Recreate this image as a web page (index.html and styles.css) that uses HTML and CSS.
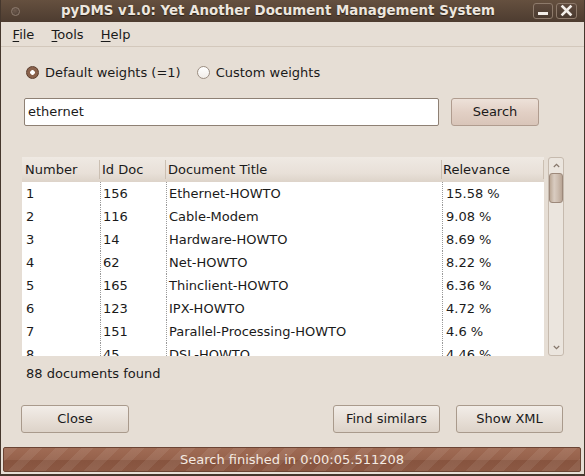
FILE: index.html
```html
<!DOCTYPE html>
<html>
<head>
<meta charset="utf-8">
<link rel="stylesheet" href="styles.css">
</head>
<body>
<div class="window">
  <div class="titlebar">
    <span class="win-icon"></span>
    <div class="title">pyDMS v1.0: Yet Another Document Management System</div>
    <div class="wm-buttons">
      <span class="wm-btn"><svg width="18" height="14" viewBox="0 0 18 14"><rect x="4" y="8" width="10" height="3" fill="#f3eee9"/></svg></span>
      <span class="wm-btn wm-close"><svg width="19" height="14" viewBox="0 0 19 14"><path d="M5.5 2.5 L13.5 10.5 M13.5 2.5 L5.5 10.5" stroke="#f3eee9" stroke-width="2.6" stroke-linecap="square" fill="none"/></svg></span>
    </div>
  </div>
  <div class="menubar">
    <span class="menu-item"><u>F</u>ile</span>
    <span class="menu-item"><u>T</u>ools</span>
    <span class="menu-item"><u>H</u>elp</span>
  </div>
  <div class="content">
    <div class="radio-row">
      <label class="radio"><span class="radio-dot checked"></span>Default weights (=1)</label>
      <label class="radio"><span class="radio-dot"></span>Custom weights</label>
    </div>
    <div class="search-row">
      <div class="entry">ethernet</div>
      <div class="button search-btn">Search</div>
    </div>
    <div class="results">
      <div class="list">
        <div class="list-header grid">
          <div class="hcell h1">Number</div>
          <div class="hcell h2">Id Doc</div>
          <div class="hcell h3">Document Title</div>
          <div class="hcell h4">Relevance</div>
        </div>
        <div class="list-body">
          <div class="row grid"><div class="cell">1</div><div class="cell">156</div><div class="cell">Ethernet-HOWTO</div><div class="cell">15.58 %</div></div>
          <div class="row grid"><div class="cell">2</div><div class="cell">116</div><div class="cell">Cable-Modem</div><div class="cell">9.08 %</div></div>
          <div class="row grid"><div class="cell">3</div><div class="cell">14</div><div class="cell">Hardware-HOWTO</div><div class="cell">8.69 %</div></div>
          <div class="row grid"><div class="cell">4</div><div class="cell">62</div><div class="cell">Net-HOWTO</div><div class="cell">8.22 %</div></div>
          <div class="row grid"><div class="cell">5</div><div class="cell">165</div><div class="cell">Thinclient-HOWTO</div><div class="cell">6.36 %</div></div>
          <div class="row grid"><div class="cell">6</div><div class="cell">123</div><div class="cell">IPX-HOWTO</div><div class="cell">4.72 %</div></div>
          <div class="row grid"><div class="cell">7</div><div class="cell">151</div><div class="cell">Parallel-Processing-HOWTO</div><div class="cell">4.6 %</div></div>
          <div class="row grid"><div class="cell">8</div><div class="cell">45</div><div class="cell">DSL-HOWTO</div><div class="cell">4.46 %</div></div>
        </div>
      </div>
      <div class="scrollbar">
        <div class="sb-arrow"><svg width="7" height="5" viewBox="0 0 7 5"><polyline points="0.8,4 3.5,1.3 6.2,4" stroke="#85766a" stroke-width="1.2" fill="none"/></svg></div>
        <div class="sb-thumb"></div>
        <div class="sb-trough"></div>
        <div class="sb-arrow"><svg width="7" height="5" viewBox="0 0 7 5"><polyline points="0.8,1 3.5,3.7 6.2,1" stroke="#85766a" stroke-width="1.2" fill="none"/></svg></div>
      </div>
    </div>
    <div class="count">88 documents found</div>
    <div class="button-row">
      <div class="button btn-close">Close</div>
      <div class="spacer"></div>
      <div class="button btn-wide">Find similars</div>
      <div class="button btn-wide">Show XML</div>
    </div>
  </div>
  <div class="statusbar">Search finished in 0:00:05.511208</div>
</div>
</body>
</html>
```

FILE: styles.css
```css
* { box-sizing: border-box; }
html, body { margin: 0; padding: 0; }
body {
  width: 585px;
  height: 476px;
  overflow: hidden;
  background: #3a2d25;
  font-family: "DejaVu Sans", "Liberation Sans", sans-serif;
  font-size: 13px;
  color: #1a1a1a;
}
.window {
  width: 585px;
  height: 476px;
  display: flex;
  flex-direction: column;
  background: #e6ded5;
  border: 1px solid #45372d;
  border-top: 0;
  border-bottom-width: 2px;
}
.titlebar {
  height: 22px;
  flex: none;
  display: flex;
  align-items: center;
  background: linear-gradient(#65503f, #4d3c30);
}
.win-icon {
  width: 9px;
  height: 9px;
  margin-left: 10px;
  border-radius: 50%;
  border: 1px solid #8f7d70;
  background: radial-gradient(circle at 40% 35%, #6e5b4e, #4a3b31);
}
.title {
  flex: 1;
  text-align: center;
  padding-left: 3px;
  font-size: 13.4px;
  font-weight: bold;
  color: #ede6de;
  text-shadow: 0 1px 1px #2a1f18;
  white-space: nowrap;
  line-height: 22px;
}
.wm-buttons {
  display: flex;
  gap: 3px;
  margin-right: 7px;
}
.wm-btn {
  width: 20px;
  height: 16px;
  border: 1px solid #8d7a6b;
  border-radius: 3px;
  background: linear-gradient(#5e4a3d, #4a3a2f);
  display: flex;
  align-items: center;
  justify-content: center;
}
.wm-close { width: 21px; }
.menubar {
  height: 25px;
  flex: none;
  display: flex;
  align-items: center;
  padding-left: 3px;
  border-bottom: 1px solid #d3c8bc;
}
.menu-item { padding: 0 8.6px; }
.menu-item u { text-decoration-thickness: 1px; text-underline-offset: 2px; }
.content {
  flex: 1;
  padding: 15px 20px 14px 21px;
  display: flex;
  flex-direction: column;
}
.radio-row {
  display: flex;
  align-items: center;
  height: 20px;
  padding-left: 4px;
  gap: 16px;
}
.radio {
  display: flex;
  align-items: center;
  gap: 6px;
}
.radio-dot {
  width: 13px;
  height: 13px;
  border-radius: 50%;
  border: 1px solid #9c8e82;
  background: linear-gradient(#ffffff, #f1ede9);
}
.radio-dot.checked {
  border-color: #5a3c2c;
  background: radial-gradient(circle, #ffffff 0 2px, #8a624c 2.6px);
}
.search-row {
  display: flex;
  gap: 12px;
  margin-top: 16px;
  padding: 0 25px 0 2px;
  height: 28px;
}
.entry {
  flex: 1;
  display: flex;
  align-items: center;
  padding-left: 3px;
  padding-bottom: 1px;
  background: #ffffff;
  border: 1px solid #8e8074;
  border-radius: 2px;
}
.button {
  height: 28px;
  padding-bottom: 1px;
  display: flex;
  align-items: center;
  justify-content: center;
  border: 1px solid #a99a8c;
  border-radius: 3px;
  background: linear-gradient(#f2ede8, #e8e0d8 50%, #ddd3c9);
  white-space: nowrap;
}
.search-btn {
  width: 88px;
  border-color: #b09c8f;
  background: linear-gradient(#ede1d9, #e2d0c5 50%, #d9c5b9);
}
.results {
  display: flex;
  gap: 4px;
  margin-top: 31px;
  height: 199px;
}
.list {
  flex: 1;
  display: flex;
  flex-direction: column;
  min-width: 0;
}
.grid {
  display: grid;
  grid-template-columns: 78px 66px 276px 1fr;
}
.list-header {
  height: 25px;
  flex: none;
  background: linear-gradient(#efe9e3, #e8e0d8 65%, #ddd3c9);
}
.hcell {
  display: flex;
  align-items: center;
  padding-left: 2px;
  white-space: nowrap;
  background: linear-gradient(#cbbfb2, #cbbfb2) right center / 1px 19px no-repeat;
}
.hcell.h1 { padding-left: 3px; }
.hcell.h4 { padding-left: 1px; }
.list-body {
  flex: 1;
  overflow: hidden;
  background: #ffffff;
}
.row { height: 23px; }
.cell {
  display: flex;
  align-items: center;
  padding-left: 4px;
  white-space: nowrap;
}
.cell + .cell {
  border-left: 1px dotted #9a9a9a;
  padding-left: 2px;
}
.cell:last-child { padding-left: 3px; }
.scrollbar {
  width: 16px;
  flex: none;
  display: flex;
  flex-direction: column;
  align-items: center;
  border: 1px solid #c6baae;
  border-radius: 3px;
  background: #ebe5de;
}
.sb-arrow {
  width: 100%;
  height: 15px;
  flex: none;
  display: flex;
  align-items: center;
  justify-content: center;
}
.sb-thumb {
  width: 14px;
  height: 30px;
  flex: none;
  border: 1px solid #9d897b;
  border-radius: 3px;
  background: linear-gradient(90deg, #bca997, #d9ccc1 35%, #cdbdb0 65%, #b9a595);
}
.sb-trough { flex: 1; }
.count {
  margin-top: 9px;
  padding-left: 4px;
  line-height: 17px;
}
.button-row {
  display: flex;
  gap: 16px;
  margin: 23px 1px 0 -1px;
}
.btn-close { width: 108px; }
.btn-wide { width: 107px; }
.spacer { flex: 1; }
.statusbar {
  height: 25px;
  flex: none;
  margin: 0 3px 2px 2px;
  display: flex;
  align-items: center;
  justify-content: center;
  color: #f4eae1;
  border: 1px solid #6b4434;
  border-radius: 2px;
  background:
    repeating-linear-gradient(-45deg, rgba(255,255,255,0.07) 0 9px, rgba(255,255,255,0) 9px 18px),
    linear-gradient(#a06b54, #96624c 50%, #87543f 52%, #8b5843);
}
```
